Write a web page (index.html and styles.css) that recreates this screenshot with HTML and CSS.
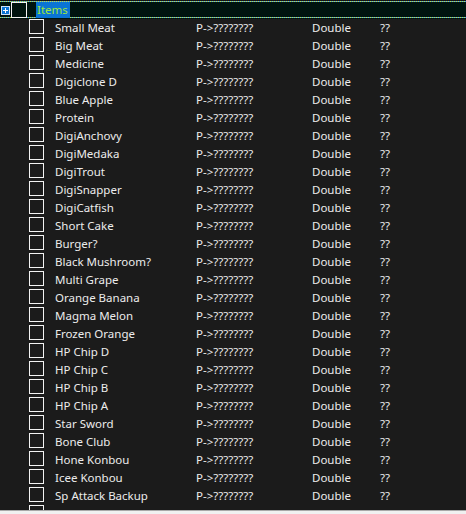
FILE: index.html
```html
<!DOCTYPE html>
<html>
<head>
<meta charset="utf-8">
<link rel="stylesheet" href="styles.css">
</head>
<body>
<div class="tree">
  <div class="list">
    <div class="root">
      <span class="plus"></span>
      <span class="cb root-cb"></span>
      <span class="label">Items</span>
    </div>
    <div class="rows" id="rows"></div>
  </div>
  <div class="bottom"></div>
</div>
<script>
const names=["Small Meat","Big Meat","Medicine","Digiclone D","Blue Apple","Protein","DigiAnchovy","DigiMedaka","DigiTrout","DigiSnapper","DigiCatfish","Short Cake","Burger?","Black Mushroom?","Multi Grape","Orange Banana","Magma Melon","Frozen Orange","HP Chip D","HP Chip C","HP Chip B","HP Chip A","Star Sword","Bone Club","Hone Konbou","Icee Konbou","Sp Attack Backup","Armor Crush"];
const c=document.getElementById('rows');
for(const n of names){
  const r=document.createElement('div');r.className='row';
  r.innerHTML='<span class="cell first"><span class="cb"></span></span><span class="cell">'+n+'</span><span class="cell">P-&gt;????????</span><span class="cell">Double</span><span class="cell">??</span>';
  c.appendChild(r);
}
</script>
</body>
</html>
```
FILE: styles.css
```css
html,body{margin:0;padding:0;}
body{background:#1b1b1b;width:466px;height:514px;overflow:hidden;font-family:"Segoe UI","Noto Sans",sans-serif;font-size:11.5px;color:#ececec;}
.tree{display:flex;flex-direction:column;height:514px;}
.list{height:510px;overflow:hidden;background:#1b1b1b;}
.root{height:16px;display:flex;align-items:center;background:#00140f;
  border-top:1px solid #151515;border-bottom:1px solid transparent;
  background-image:repeating-linear-gradient(90deg,#c4e83a 0 1px,#3b8df0 1px 2px),repeating-linear-gradient(90deg,#c4e83a 0 1px,#3b8df0 1px 2px);
  background-size:100% 1px,100% 1px;background-position:0 0,0 100%;background-repeat:no-repeat;
  padding:1px 0 0 0;}
.plus{width:9px;height:9px;margin-left:1px;background:#0a74d4;position:relative;box-sizing:border-box;border:1px solid #cfe3f7;}
.plus::before{content:"";position:absolute;left:1px;top:3px;width:5px;height:1px;background:#fff;}
.plus::after{content:"";position:absolute;left:3px;top:1px;width:1px;height:5px;background:#fff;}
.cb{display:block;width:15px;height:15px;border:1px solid #f2f2f2;box-sizing:border-box;}
.root-cb{width:16px;height:16px;margin-left:1px;}
.label{margin-left:9px;background:#0a74d4;color:#9ee63c;height:16px;line-height:15px;padding:0 2px 0 1px;}
.rows{display:flex;flex-direction:column;}
.row{display:grid;grid-template-columns:26px 141px 116px 68px 1fr;height:18px;padding-left:29px;align-items:center;white-space:nowrap;}
.first{align-self:start;}
.cell{line-height:18px;}
.bottom{height:4px;border-top:1px solid #a8a8a8;background:#f0f0f0;box-sizing:border-box;}
```
